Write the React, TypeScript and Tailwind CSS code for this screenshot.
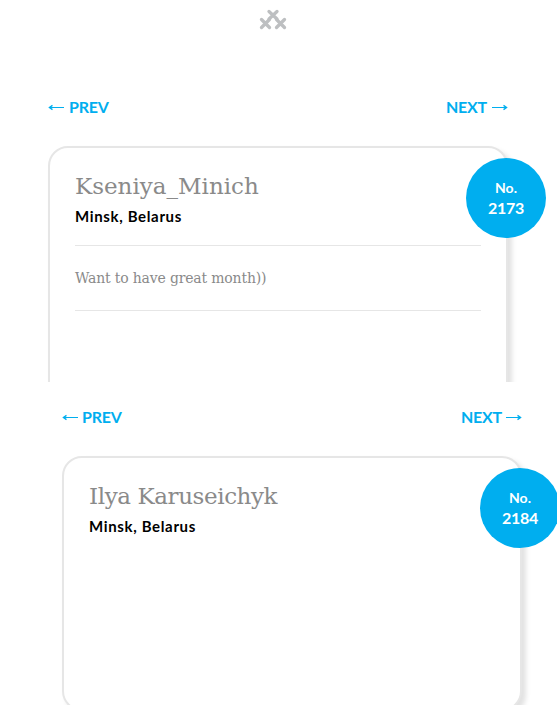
import classNames from "clsx";
import type { PropsWithChildren } from "react";

interface ArrowProps {
  className?: string;
}

const Arrow = ({ className }: ArrowProps) => (
  <svg
    width="16"
    height="7"
    viewBox="0 0 16 7"
    fill="none"
    stroke="currentColor"
    className={className}
  >
    <path d="M0 3.5h15" />
    <path d="M11.5 1.4 14.5 3.5l-3 2.1" strokeWidth="1.4" />
  </svg>
);

const Logo = () => (
  <svg
    width="28"
    height="21"
    viewBox="0 0 28 21"
    fill="none"
    stroke="#bdbfc1"
    strokeWidth="3.3"
    strokeLinecap="round"
  >
    <path d="M10 2.5l8 7.5M18 2.5l-8 7.5" />
    <path d="M2.5 10.5l8 8M10.5 10.5l-8 8" />
    <path d="M17.5 10.5l8 8M25.5 10.5l-8 8" />
  </svg>
);

interface PagerProps {
  gapClassName: string;
}

const Pager = ({ gapClassName }: PagerProps) => (
  <nav className="flex h-5 items-center justify-between font-['Lato',sans-serif] text-[16px] leading-5 font-bold text-[#00aeef]">
    <a className={classNames("flex items-center", gapClassName)}>
      <Arrow className="rotate-180" />
      <span className="tracking-[-0.2px]">PREV</span>
    </a>
    <a className={classNames("flex items-center", gapClassName)}>
      <span className="tracking-[-0.2px]">NEXT</span>
      <Arrow />
    </a>
  </nav>
);

interface EntryCardProps {
  name: string;
  nameClassName?: string;
  place: string;
  number: number;
  className?: string;
}

const EntryCard = ({
  name,
  nameClassName,
  place,
  number,
  className,
  children,
}: PropsWithChildren<EntryCardProps>) => (
  <article
    className={classNames(
      "relative rounded-[20px] border-2 border-[#e6e6e6] bg-white px-[25px] pt-[22px] shadow-[4px_4px_5px_#e2e2e2]",
      className
    )}
  >
    <h2
      className={classNames(
        "h-8 font-['DejaVu_Serif',serif] text-[23px] leading-8 whitespace-nowrap text-[#8a8a8a]",
        nameClassName
      )}
    >
      {name}
    </h2>
    <p className="mt-1 h-5 font-['Lato',sans-serif] text-[15px] leading-5 font-bold tracking-[0.65px] text-black">
      {place}
    </p>
    {children}
    <div className="absolute top-[10px] -right-10 flex size-20 flex-col items-center justify-center rounded-full bg-[#00aeef] pb-px font-['Lato',sans-serif] font-bold text-white">
      <span className="text-[14px] leading-5">No.</span>
      <span className="text-[16px] leading-5 tracking-[-0.3px]">{number}</span>
    </div>
  </article>
);

const App = () => (
  <main className="h-[724px] w-[557px] overflow-hidden bg-white">
    <header className="flex h-[97px] justify-center pt-[9px] pr-[11px]">
      <Logo />
    </header>

    <section className="h-[285px] overflow-hidden pr-[49px] pl-12">
      <Pager gapClassName="gap-[5px]" />
      <EntryCard
        name="Kseniya_Minich"
        place="Minsk, Belarus"
        number={2173}
        className="mt-[29px] h-[255px]"
      >
        <p className="mt-[19px] h-[66px] border-y border-[#e6e6e6] font-['DejaVu_Serif',serif] text-[14px] leading-[64px] tracking-[-0.17px] text-[#8a8a8a]">
          Want to have great month))
        </p>
      </EntryCard>
    </section>

    <section className="h-[323px] overflow-hidden pt-[25px] pr-[35px] pl-[62px]">
      <Pager gapClassName="gap-1" />
      <EntryCard
        name="Ilya Karuseichyk"
        nameClassName="tracking-[-0.4px]"
        place="Minsk, Belarus"
        number={2184}
        className="mt-[29px] h-[255px]"
      />
    </section>
  </main>
);

export default App;
